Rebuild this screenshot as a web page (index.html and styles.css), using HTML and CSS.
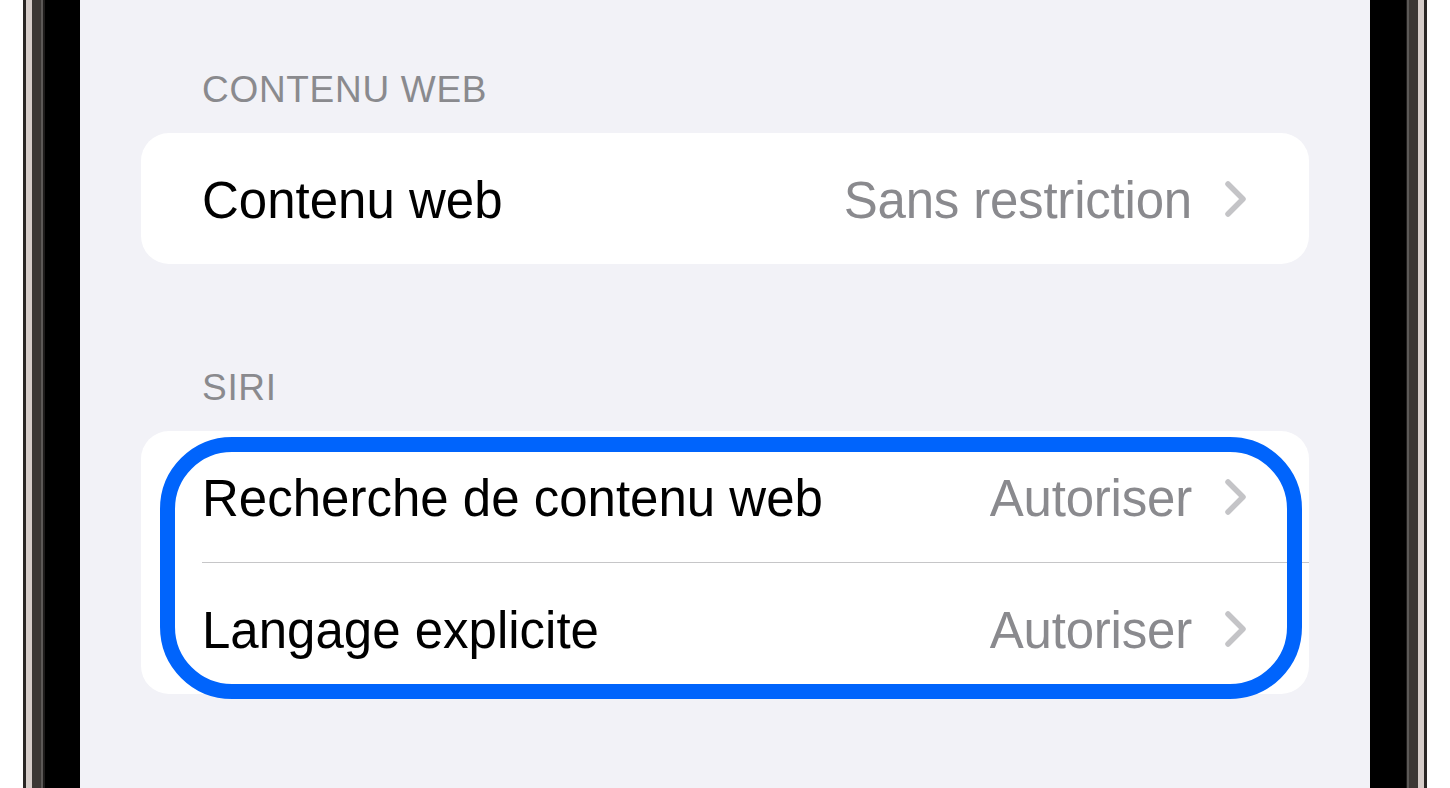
FILE: index.html
```html
<!DOCTYPE html>
<html lang="fr">
<head>
<meta charset="utf-8">
<title>Réglages</title>
<link rel="stylesheet" href="styles.css">
</head>
<body>
<div class="device">
  <div class="outside"></div>
  <div class="bezel bezel-left"></div>
  <div class="border-black left"></div>
  <main class="screen">
    <h2 class="section-header">CONTENU WEB</h2>
    <section class="card">
      <div class="row">
        <span class="label">Contenu web</span>
        <span class="value">Sans restriction</span>
        <svg class="chevron" viewBox="0 0 24 36" width="24" height="36"><polyline points="4,3 19,18 4,33"/></svg>
      </div>
    </section>

    <h2 class="section-header siri">SIRI</h2>
    <section class="card highlighted">
      <div class="row">
        <span class="label">Recherche de contenu web</span>
        <span class="value">Autoriser</span>
        <svg class="chevron" viewBox="0 0 24 36" width="24" height="36"><polyline points="4,3 19,18 4,33"/></svg>
      </div>
      <div class="separator"></div>
      <div class="row">
        <span class="label">Langage explicite</span>
        <span class="value">Autoriser</span>
        <svg class="chevron" viewBox="0 0 24 36" width="24" height="36"><polyline points="4,3 19,18 4,33"/></svg>
      </div>
      <div class="outline"></div>
    </section>
  </main>
  <div class="border-black right"></div>
  <div class="bezel bezel-right"></div>
  <div class="outside fill"></div>
</div>
</body>
</html>
```

FILE: styles.css
```css
html, body {
  margin: 0;
  padding: 0;
  background: #ffffff;
  height: 788px;
  overflow: hidden;
}

.device {
  display: flex;
  height: 788px;
  width: 1450px;
}

.outside {
  width: 23px;
  background: #ffffff;
  flex: none;
}
.outside.fill {
  flex: 1;
}

.bezel {
  width: 22px;
  flex: none;
}
.bezel-left {
  background: linear-gradient(to right,
    #2a2725 0, #2a2725 3px,
    #d6cdc9 3px, #d6cdc9 9px,
    #3b3734 9px, #3b3734 18px,
    #5c5957 18px, #5c5957 20px,
    #1e1c1b 20px, #1e1c1b 22px);
}
.bezel-right {
  width: 21px;
  background: linear-gradient(to right,
    #1e1c1b 0, #1e1c1b 1px,
    #5c5957 1px, #5c5957 3px,
    #3b3734 3px, #3b3734 12px,
    #d6cdc9 12px, #d6cdc9 18px,
    #2a2725 18px, #2a2725 21px);
}

.border-black {
  background: #000000;
  flex: none;
}
.border-black.left { width: 35px; }
.border-black.right { width: 36px; }

.screen {
  width: 1290px;
  flex: none;
  background: #f2f2f7;
  padding: 68px 61px 0;
  box-sizing: border-box;
  font-family: "Liberation Sans", Arial, sans-serif;
}

.section-header {
  margin: 0 0 21px;
  padding-left: 61px;
  font-size: 37px;
  line-height: 44px;
  font-weight: normal;
  color: #8a8a8e;
  letter-spacing: 0.7px;
}
.section-header.siri {
  margin-top: 102px;
}

.card {
  background: #ffffff;
  border-radius: 28px;
  position: relative;
}

.row {
  display: flex;
  align-items: center;
  height: 131px;
  padding: 5px 61px 0;
  box-sizing: border-box;
}

.label {
  flex: 1;
  font-size: 51px;
  line-height: 62px;
  color: #000000;
  white-space: nowrap;
}

.value {
  font-size: 51px;
  line-height: 62px;
  color: #8a8a8e;
  white-space: nowrap;
  letter-spacing: -0.2px;
}

.chevron {
  margin-left: 32px;
  margin-top: -5px;
  flex: none;
}
.chevron polyline {
  fill: none;
  stroke: #c4c4c7;
  stroke-width: 5.5;
  stroke-linecap: round;
  stroke-linejoin: round;
}

.separator {
  height: 1px;
  background: #c6c6c8;
  margin-left: 61px;
}

.outline {
  position: absolute;
  left: 19px;
  top: 6px;
  width: 1142px;
  height: 262px;
  box-sizing: border-box;
  border: 15px solid #0064fc;
  border-radius: 72px;
  pointer-events: none;
}
```
